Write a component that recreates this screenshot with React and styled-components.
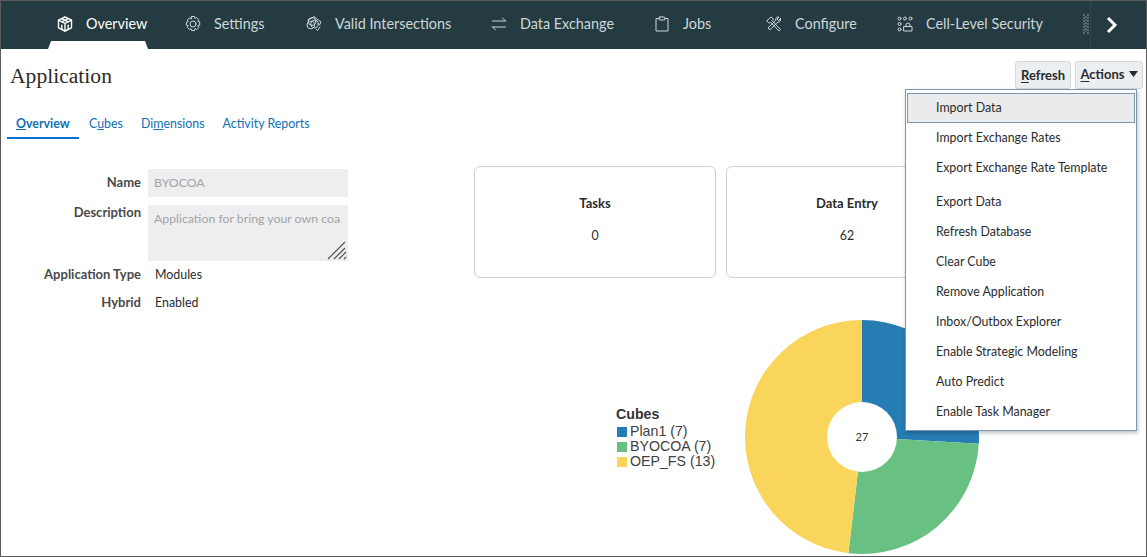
import React from "react";
import styled, { createGlobalStyle } from "styled-components";

const GlobalStyle = createGlobalStyle`
  html, body { margin: 0; padding: 0; background: #fff; }
  body { font-family: "Lato", "Noto Sans", sans-serif; color: #2b2b2b; }
`;

//////////
// STYLE
//////////

const Frame = styled.div`
  position: relative;
  box-sizing: border-box;
  width: 1147px;
  height: 557px;
  border: 1px solid #5a5a5a;
  overflow: hidden;
`;

const NavBar = styled.nav`
  height: 48px;
  background: #253b42;
  display: flex;
  position: relative;
`;

const NavTrack = styled.div`
  flex: 1;
  display: flex;
  overflow: hidden;
  padding-left: 56px;
`;

const NavTab = styled.div`
  position: relative;
  flex: none;
  width: ${(p) => p.$width}px;
  height: 48px;
  display: flex;
  align-items: center;
  gap: 13px;
  padding-bottom: 3px;
  box-sizing: border-box;
  font-size: 14.4px;
  color: ${(p) => (p.$active ? "#fff" : "#cdd6d9")};
  white-space: nowrap;
  svg { flex: none; }
`;

const TabNotch = styled.span`
  position: absolute;
  left: -9px;
  bottom: 0;
  width: 100px;
  height: 8px;
  background: #fff;
  clip-path: polygon(3px 0, 97px 0, 100px 100%, 0 100%);
`;

const NavNext = styled.div`
  flex: none;
  width: 56px;
  height: 48px;
  border-left: 1px solid #30474e;
  box-sizing: border-box;
  padding-right: 13px;
  display: flex;
  align-items: center;
  justify-content: center;
`;

const Body = styled.main`
  padding: 0 3px 0 6px;
`;

const TitleRow = styled.div`
  display: flex;
  justify-content: space-between;
  align-items: flex-start;
  padding: 12px 0 0 3px;
  height: 44px;
  box-sizing: border-box;
`;

const Title = styled.h1`
  margin: 1px 0 0;
  font-family: "Liberation Serif", Georgia, serif;
  font-weight: 400;
  font-size: 21.6px;
  line-height: 28px;
  color: #2f2a25;
`;

const ButtonRow = styled.div`
  display: flex;
  gap: 4px;
`;

const ActionButton = styled.button`
  height: 28px;
  width: ${(p) => p.$width}px;
  padding: 0 0 ${(p) => p.$lift || 0}px;
  font-family: inherit;
  font-size: 13px;
  font-weight: 700;
  color: #2b2b2b;
  background: #eceff1;
  border: 1px solid #d3d8db;
  border-radius: 3px;
  display: flex;
  align-items: center;
  justify-content: center;
  gap: 4px;
  u { text-underline-offset: 2px; }
`;

const SubTabs = styled.div`
  display: flex;
  margin-top: 7px;
  height: 39px;
  box-sizing: border-box;
`;

const SubTab = styled.a`
  box-sizing: border-box;
  height: 39px;
  width: ${(p) => (p.$active ? "72px" : "auto")};
  padding: 15px 9px 0;
  margin-right: ${(p) => p.$gap || 0}px;
  font-size: 12.4px;
  line-height: 18px;
  font-weight: ${(p) => (p.$active ? 700 : 400)};
  color: #0f6fb5;
  border-bottom: ${(p) => (p.$active ? "2px solid #0572ce" : "none")};
  white-space: nowrap;
`;

const Content = styled.div`
  display: flex;
  margin-top: 25px;
`;

const Form = styled.div`
  flex: none;
  width: 467px;
  display: grid;
  grid-template-columns: 134px 200px;
  column-gap: 7px;
  grid-auto-rows: min-content;
  align-content: start;
  margin-top: 5px;
`;

const Label = styled.div`
  font-size: 13px;
  font-weight: 700;
  color: #4a4a4a;
  text-align: right;
  line-height: ${(p) => (p.$top ? "14px" : "26px")};
  height: ${(p) => p.$height || 28}px;
  margin-bottom: ${(p) => (p.$top ? 3 : 8)}px;
`;

const ReadField = styled.div`
  position: relative;
  box-sizing: border-box;
  height: ${(p) => p.$height || 28}px;
  margin-bottom: ${(p) => (p.$multi ? 3 : 8)}px;
  padding: ${(p) => (p.$multi ? "6px" : "0")} 6px 0;
  background: #eeeef0;
  color: #a3a3a3;
  font-size: 12.3px;
  line-height: ${(p) => (p.$multi ? "16px" : "28px")};
  white-space: nowrap;
  overflow: hidden;
  svg { position: absolute; right: 1px; bottom: 1px; }
`;

const Value = styled.div`
  font-size: 12.4px;
  line-height: 22px;
  height: 20px;
  margin-bottom: 8px;
  padding-left: 7px;
  color: #2b2b2b;
`;

const InlineLabel = styled(Label)`
  line-height: 20px;
  height: 20px;
`;

const RightColumn = styled.div`
  flex: 1;
`;

const Cards = styled.div`
  display: flex;
  gap: 10px;
  margin-top: 2px;
`;

const Card = styled.div`
  box-sizing: border-box;
  width: 242px;
  height: 112px;
  border: 1px solid #cfcfcf;
  border-radius: 6px;
  display: flex;
  flex-direction: column;
  align-items: center;
  padding-top: 27px;
  font-size: 13px;
  strong { line-height: 18px; }
  span { margin-top: 15px; line-height: 18px; font-size: 12.4px; }
`;

const ChartRow = styled.div`
  display: flex;
  margin-top: 41px;
  padding-left: 142px;
`;

const Legend = styled.div`
  flex: none;
  width: 128px;
  margin-top: 86px;
  font-family: "Liberation Sans", Arial, sans-serif;
  font-size: 14.2px;
  line-height: 15px;
  color: #404040;
  strong { display: block; line-height: 19px; color: #333; }
`;

const LegendItem = styled.div`
  display: flex;
  align-items: center;
  gap: 3px;
  white-space: nowrap;
`;

const Swatch = styled.span`
  width: 10px;
  height: 10px;
  margin-left: 1px;
  background: ${(p) => p.$color};
`;

const Menu = styled.div`
  position: absolute;
  left: 904px;
  top: 88px;
  box-sizing: border-box;
  width: 232px;
  height: 342px;
  padding: 3px 1px;
  background: #fff;
  border: 1px solid #7e98ae;
  box-shadow: 1px 2px 4px rgba(0, 0, 0, 0.25);
`;

const MenuItem = styled.div`
  box-sizing: border-box;
  height: 30px;
  margin-bottom: ${(p) => (p.$break ? 4 : 0)}px;
  padding-left: 28px;
  font-size: 12.4px;
  line-height: 27px;
  color: #2b2b2b;
  border: 1px solid ${(p) => (p.$focused ? "#7b96ad" : "transparent")};
  background: ${(p) => (p.$focused ? "#e9ebec" : "transparent")};
`;

//////////
// ICONS
//////////

const Stroke = ({ size = 16, sw = 1, children }) => (
  <svg width={size} height={size} viewBox="0 0 16 16" fill="none" stroke="currentColor" strokeWidth={sw} strokeLinecap="round" strokeLinejoin="round">
    {children}
  </svg>
);

const OverviewIcon = () => (
  <Stroke sw={1.4}>
    <path d="M8 1 14.5 4.2v7.6L8 15 1.5 11.800V4.200z" />
    <path d="M1.500 4.200 8 7.500l6.500-3.300M8 7.500V15M4.800 2.700 11.200 5.900M11.200 2.700 4.800 5.900M4.800 9.200v4M11.200 9.200v4" />
  </Stroke>
);

const SettingsIcon = () => (
  <Stroke>
    <circle cx="8" cy="8" r="3" />
    <path d="M6.600.500h2.800l.5 1.900 1.800-.9 2 2-.9 1.800 1.900.5v3.400l-1.900.5.900 1.800-2 2-1.800-.9-.5 1.900H6.600l-.5-1.900-1.800.9-2-2 .9-1.800-1.900-.5V6.300l1.900-.5-.9-1.800 2-2 1.800.9z" />
  </Stroke>
);

const IntersectIcon = () => (
  <Stroke>
    <path d="M8 .8 15 6l-1.500 3M8 .8 2 4" />
    <circle cx="6" cy="5.500" r="3.800" />
    <circle cx="4.800" cy="9" r="3.800" />
    <circle cx="8.500" cy="8" r="3.800" />
    <path d="m10 13 1.500 1.500 2.500-3.500" />
  </Stroke>
);

const ExchangeIcon = () => (
  <Stroke>
    <path d="M1.500 5h13M11.500 2l3 3M14.500 11h-13M4.500 14l-3-3" />
  </Stroke>
);

const JobsIcon = () => (
  <Stroke>
    <path d="M5 2.500H2v12.500h12V2.500h-3" />
    <rect x="5" y="1" width="6" height="3" rx="1" />
  </Stroke>
);

const ConfigureIcon = () => (
  <Stroke>
    <path d="M1 4.500 5 1l2.500 2-1.500 1.500 8.500 9-1.500 1.500-8.500-9-1 1z" />
    <path d="M14.500 2.500 12.500 4.500 11 3l2-2c-2-.5-3.800 1.200-3.200 3.200L2 12l1.800 2 7.800-7.800c2 .5 3.500-1.500 2.900-3.700z" />
  </Stroke>
);

const SecurityIcon = () => (
  <Stroke>
    <circle cx="2.500" cy="2.500" r="1.500" />
    <circle cx="8" cy="2.500" r="1.500" />
    <circle cx="13.500" cy="2.500" r="1.500" />
    <circle cx="2.500" cy="8" r="1.500" />
    <circle cx="2.500" cy="13.500" r="1.500" />
    <rect x="7" y="10.500" width="8" height="4.500" />
    <path d="M9 10.500V9a2 2 0 0 1 4 0v1.500" />
  </Stroke>
);

const CutOffIcon = () => (
  <svg width="6" height="22" viewBox="0 0 6 22" fill="none" stroke="#8d9a9e" strokeWidth="1" strokeDasharray="2 1">
    <path d="M1 1v20M3 3v16M5 1v20" />
  </svg>
);

const ChevronRight = () => (
  <svg width="14" height="18" viewBox="0 0 14 18" fill="none" stroke="#fff" strokeWidth="3">
    <path d="m3 2 7 7-7 7" />
  </svg>
);

const ResizeGrip = () => (
  <svg width="20" height="20" viewBox="0 0 20 20" stroke="#555" strokeWidth="1.200">
    <path d="M1 19 18 2M7 19 18 8M12 19l7-7M17 19l2-2" />
  </svg>
);

const CaretDown = () => (
  <svg width="9" height="6" viewBox="0 0 9 6" fill="#2b2b2b">
    <path d="M0 0h9L4.500 6z" />
  </svg>
);

// slices of the donut, clockwise from 12 o'clock
const CUBES = [
  { name: "Plan1", count: 7, color: "#267db3" },
  { name: "BYOCOA", count: 7, color: "#68c182" },
  { name: "OEP_FS", count: 13, color: "#fad55c" },
];

const Pie = () => {
  const total = CUBES.reduce((sum, c) => sum + c.count, 0);
  const r = 117;
  const c = 118;
  let angle = 0;
  return (
    <svg width="236" height="236" viewBox="0 0 236 236">
      {CUBES.map((cube) => {
        const start = angle;
        angle += (cube.count / total) * Math.PI * 2;
        const x1 = c + r * Math.sin(start);
        const y1 = c - r * Math.cos(start);
        const x2 = c + r * Math.sin(angle);
        const y2 = c - r * Math.cos(angle);
        const large = angle - start > Math.PI ? 1 : 0;
        return <path key={cube.name} fill={cube.color} d={`M${c} ${c}L${x1} ${y1}A${r} ${r} 0 ${large} 1 ${x2} ${y2}Z`} />;
      })}
      <circle cx={c} cy={c} r="35" fill="#fff" />
      <text x={c} y={c + 4} textAnchor="middle" fontSize="11" fontFamily="Lato, sans-serif" fill="#333">
        {total}
      </text>
    </svg>
  );
};

const NAV_TABS = [
  { label: "Overview", width: 128, icon: <OverviewIcon />, active: true },
  { label: "Settings", width: 121, icon: <SettingsIcon /> },
  { label: "Valid Intersections", width: 185, icon: <IntersectIcon /> },
  { label: "Data Exchange", width: 163, icon: <ExchangeIcon /> },
  { label: "Jobs", width: 112, icon: <JobsIcon /> },
  { label: "Configure", width: 131, icon: <ConfigureIcon /> },
  { label: "Cell-Level Security", width: 186, icon: <SecurityIcon /> },
  { label: "", width: 10, icon: <CutOffIcon /> },
];

const MENU_ITEMS = [
  { label: "Import Data", focused: true },
  { label: "Import Exchange Rates" },
  { label: "Export Exchange Rate Template", brk: true },
  { label: "Export Data" },
  { label: "Refresh Database" },
  { label: "Clear Cube" },
  { label: "Remove Application" },
  { label: "Inbox/Outbox Explorer" },
  { label: "Enable Strategic Modeling" },
  { label: "Auto Predict" },
  { label: "Enable Task Manager" },
];

//////////
// REACT
//////////
const App = () => {
  return (
    <Frame>
      <GlobalStyle />
      <NavBar>
        <NavTrack>
          {NAV_TABS.map((tab) => (
            <NavTab key={tab.width} $width={tab.width} $active={tab.active}>
              {tab.icon}
              {tab.label}
              {tab.active && <TabNotch />}
            </NavTab>
          ))}
        </NavTrack>
        <NavNext>
          <ChevronRight />
        </NavNext>
      </NavBar>
      <Body>
        <TitleRow>
          <Title>Application</Title>
          <ButtonRow>
            <ActionButton $width={56}>
              <span><u>R</u>efresh</span>
            </ActionButton>
            <ActionButton $width={68} $lift={2}>
              <span><u>A</u>ctions</span>
              <CaretDown />
            </ActionButton>
          </ButtonRow>
        </TitleRow>
        <SubTabs>
          <SubTab $active $gap={1}><u>O</u>verview</SubTab>
          <SubTab>C<u>u</u>bes</SubTab>
          <SubTab>Di<u>m</u>ensions</SubTab>
          <SubTab>Activity Reports</SubTab>
        </SubTabs>
        <Content>
          <Form>
            <Label>Name</Label>
            <ReadField>BYOCOA</ReadField>
            <Label $top $height={56}>Description</Label>
            <ReadField $multi $height={56}>
              Application for bring your own coa
              <ResizeGrip />
            </ReadField>
            <InlineLabel>Application Type</InlineLabel>
            <Value>Modules</Value>
            <InlineLabel>Hybrid</InlineLabel>
            <Value>Enabled</Value>
          </Form>
          <RightColumn>
            <Cards>
              <Card>
                <strong>Tasks</strong>
                <span>0</span>
              </Card>
              <Card>
                <strong>Data Entry</strong>
                <span>62</span>
              </Card>
            </Cards>
            <ChartRow>
              <Legend>
                <strong>Cubes</strong>
                {CUBES.map((cube) => (
                  <LegendItem key={cube.name}>
                    <Swatch $color={cube.color} />
                    {cube.name} ({cube.count})
                  </LegendItem>
                ))}
              </Legend>
              <Pie />
            </ChartRow>
          </RightColumn>
        </Content>
      </Body>
      <Menu>
        {MENU_ITEMS.map((item) => (
          <MenuItem key={item.label} $focused={item.focused} $break={item.brk}>
            {item.label}
          </MenuItem>
        ))}
      </Menu>
    </Frame>
  );
};

export default App;
